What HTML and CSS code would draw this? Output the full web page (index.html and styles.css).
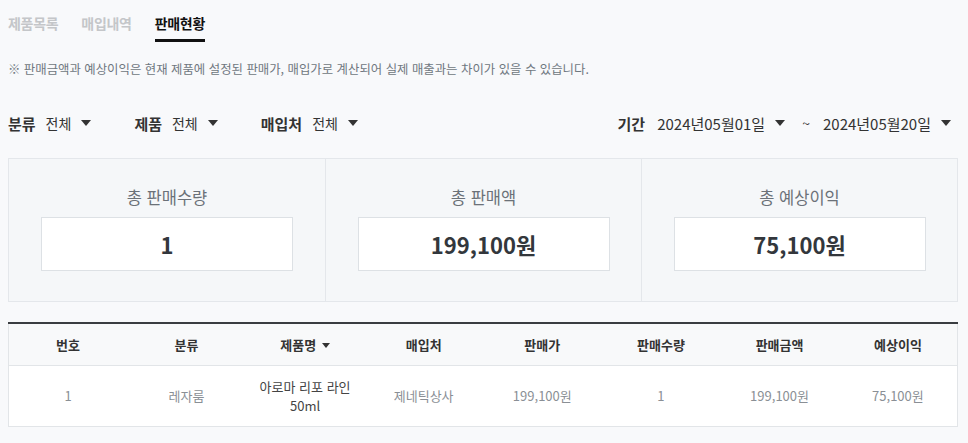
FILE: index.html
```html
<!DOCTYPE html>
<html lang="ko">
<head>
<meta charset="utf-8">
<link rel="stylesheet" href="styles.css">
</head>
<body>
<div class="page">
  <nav class="tabs">
    <a class="tab">제품목록</a>
    <a class="tab">매입내역</a>
    <a class="tab active">판매현황</a>
  </nav>
  <p class="notice">※ 판매금액과 예상이익은 현재 제품에 설정된 판매가, 매입가로 계산되어 실제 매출과는 차이가 있을 수 있습니다.</p>

  <div class="filters">
    <div class="filter-group">
      <div class="filter"><span class="flabel">분류</span><span class="fvalue">전체</span><span class="caret"></span></div>
      <div class="filter"><span class="flabel">제품</span><span class="fvalue">전체</span><span class="caret"></span></div>
      <div class="filter"><span class="flabel">매입처</span><span class="fvalue">전체</span><span class="caret"></span></div>
    </div>
    <div class="period">
      <span class="flabel">기간</span>
      <span class="date">2024년05월01일</span><span class="caret"></span>
      <span class="tilde">~</span>
      <span class="date">2024년05월20일</span><span class="caret"></span>
    </div>
  </div>

  <div class="summary">
    <div class="stat">
      <div class="stat-label">총 판매수량</div>
      <div class="stat-box">1</div>
    </div>
    <div class="stat">
      <div class="stat-label">총 판매액</div>
      <div class="stat-box">199,100원</div>
    </div>
    <div class="stat">
      <div class="stat-label">총 예상이익</div>
      <div class="stat-box">75,100원</div>
    </div>
  </div>

  <table class="grid">
    <thead>
      <tr>
        <th>번호</th>
        <th>분류</th>
        <th>제품명 <span class="caret small"></span></th>
        <th>매입처</th>
        <th>판매가</th>
        <th>판매수량</th>
        <th>판매금액</th>
        <th>예상이익</th>
      </tr>
    </thead>
    <tbody>
      <tr>
        <td>1</td>
        <td>레자룸</td>
        <td class="name">아로마 리포 라인<br>50ml</td>
        <td>제네틱상사</td>
        <td>199,100원</td>
        <td>1</td>
        <td>199,100원</td>
        <td>75,100원</td>
      </tr>
    </tbody>
  </table>
</div>
</body>
</html>
```

FILE: styles.css
```css
* { box-sizing: border-box; }
html, body { margin: 0; padding: 0; }
body {
  background: #f8f9fb;
  font-family: "Noto Sans CJK KR", "Noto Sans", sans-serif;
  color: #333;
}
.page {
  width: 950px;
  margin-left: 8px;
}
.tabs {
  display: flex;
  gap: 23px;
  padding-top: 13px;
}
.tab {
  font-size: 14px;
  font-weight: 700;
  color: #c4c6c9;
  line-height: 20px;
  padding-bottom: 6px;
  border-bottom: 3px solid transparent;
  letter-spacing: -0.3px;
}
.tab.active {
  color: #111;
  border-bottom-color: #111;
}
.notice {
  margin: 18px 0 0;
  font-size: 12.4px;
  line-height: 18px;
  color: #6f7780;
}
.filters {
  display: flex;
  justify-content: space-between;
  align-items: center;
  margin-top: 34px;
  height: 22px;
}
.filter-group { display: flex; gap: 43px; }
.filter, .period { display: flex; align-items: center; }
.flabel {
  font-size: 15px;
  font-weight: 700;
  color: #333;
  margin-right: 10px;
}
.period .flabel { margin-right: 12px; }
.fvalue, .date {
  font-size: 14px;
  color: #333;
  margin-right: 10px;
}
.date { font-size: 15px; }
.caret {
  display: inline-block;
  width: 0; height: 0;
  border-left: 5px solid transparent;
  border-right: 5px solid transparent;
  border-top: 6px solid #333;
}
.caret.small {
  border-left-width: 4px;
  border-right-width: 4px;
  border-top-width: 5px;
  vertical-align: 2px;
  margin-left: 2px;
}
.tilde { margin: 0 13px 0 17px; font-size: 14px; color: #333; }
.period { margin-right: 7px; }

.summary {
  display: grid;
  grid-template-columns: repeat(3, 1fr);
  margin-top: 24px;
  border: 1px solid #e4e7eb;
  background: #f5f7f9;
  height: 144px;
}
.stat {
  display: flex;
  flex-direction: column;
  align-items: center;
  padding-top: 26px;
}
.stat + .stat { border-left: 1px solid #e4e7eb; }
.stat-label {
  font-size: 16.5px;
  line-height: 24px;
  color: #6b7178;
}
.stat-box {
  margin-top: 8px;
  width: 80%;
  height: 54px;
  background: #fff;
  border: 1px solid #dde1e5;
  display: flex;
  align-items: center;
  justify-content: center;
  font-size: 22px;
  font-weight: 700;
  color: #33373c;
}

.grid {
  width: 100%;
  margin-top: 20px;
  border-collapse: collapse;
  table-layout: fixed;
  background: #fff;
  border: 1px solid #e2e5e8;
  border-top: 2px solid #3a3d41;
}
.grid th {
  height: 42px;
  background: #f8f9fa;
  font-size: 13px;
  font-weight: 700;
  color: #333;
  border-bottom: 1px solid #e2e5e8;
  padding: 0;
}
.grid td {
  height: 61px;
  text-align: center;
  font-size: 13px;
  color: #8a8f95;
  padding: 0;
  line-height: 19px;
}
.grid td.name { color: #444; }
```
